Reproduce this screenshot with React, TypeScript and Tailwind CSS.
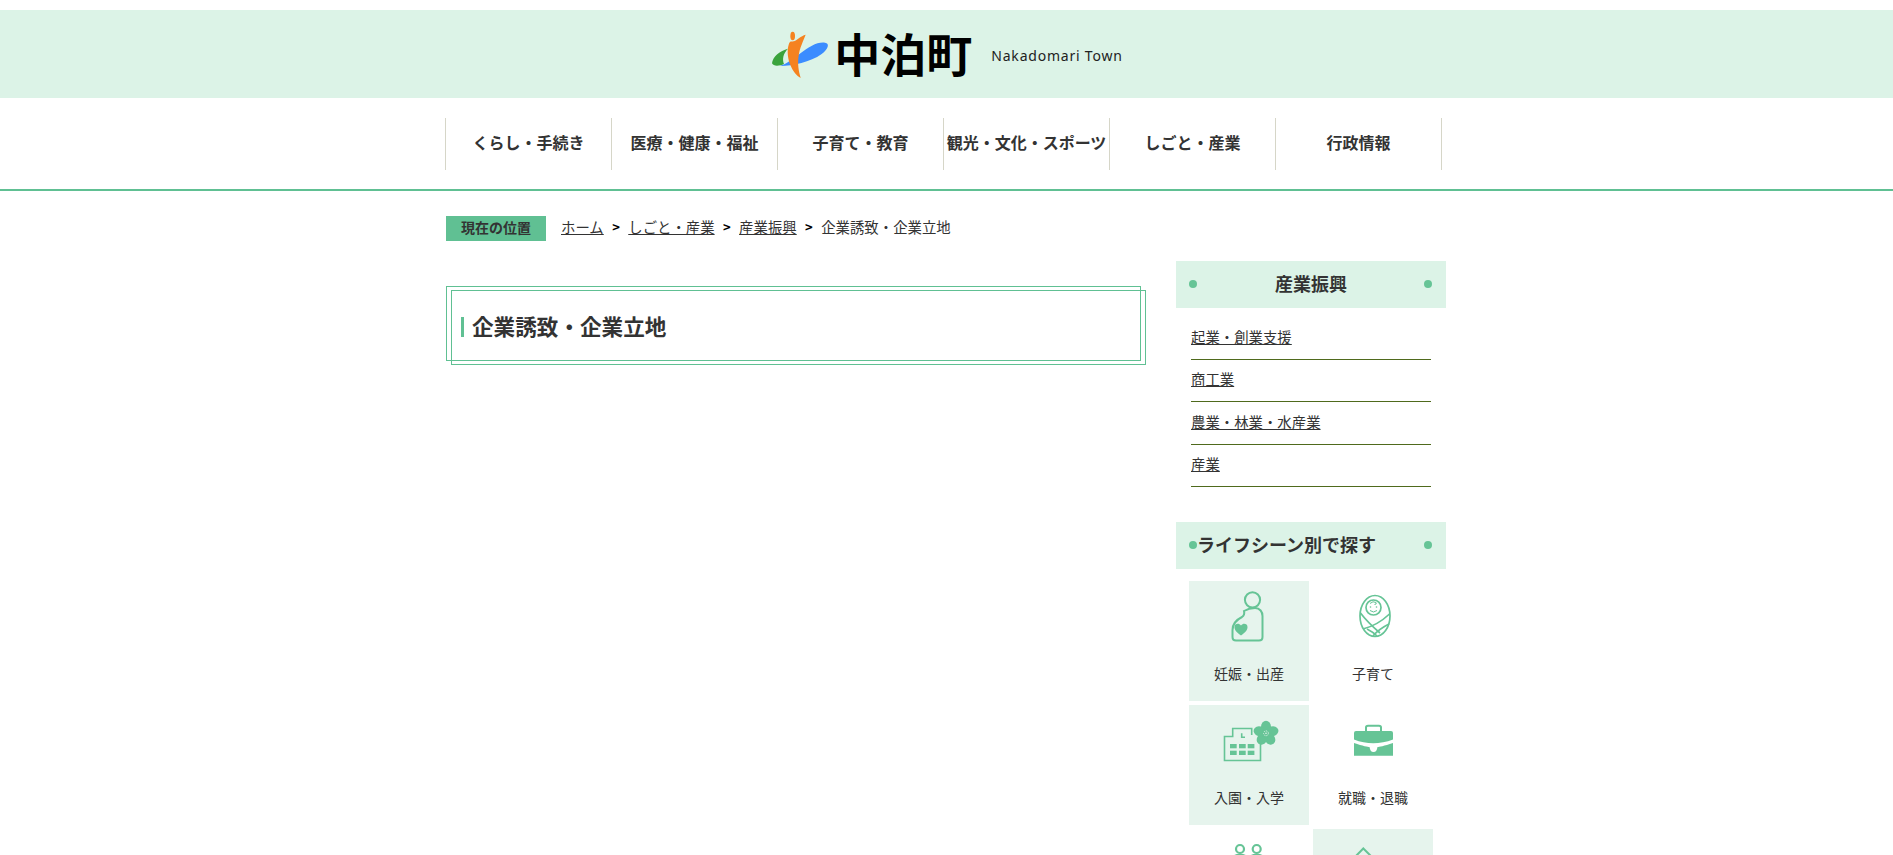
import React from 'react';

const navItems = ['くらし・手続き', '医療・健康・福祉', '子育て・教育', '観光・文化・スポーツ', 'しごと・産業', '行政情報'];
const crumbs = ['ホーム', 'しごと・産業', '産業振興'];
const subLinks = ['起業・創業支援', '商工業', '農業・林業・水産業', '産業'];

function Logo() {
  return (
    <svg viewBox="30 25 180 150" className="w-[60px] h-[50px] shrink-0">
      <path d="M36 128C38 108 60 90 84 84C70 98 66 115 72 130C60 136 40 138 36 128Z" fill="#3aa33c" />
      <path d="M60 136C100 125 150 60 195 66C210 68 205 85 185 100C150 125 100 135 60 136Z" fill="#3b8cff" />
      <ellipse cx="98" cy="46" rx="7" ry="13" fill="#f58220" />
      <path d="M137 42C122 46 112 58 102 62C95 64 90 58 86 72C80 90 84 118 92 135C98 150 110 165 122 172C116 150 112 130 116 105C119 82 130 60 137 42Z" fill="#f58220" />
    </svg>
  );
}

function SideHeader({ title, center }: { title: string; center?: boolean }) {
  return (
    <div className={`relative h-[47px] bg-[#dcf3e7] flex items-center ${center ? 'justify-center' : 'pl-[21px]'}`}>
      <span className="absolute left-[13px] top-[19px] w-2 h-2 rounded-full bg-[#66c496]" />
      <span className="absolute right-[14px] top-[19px] w-2 h-2 rounded-full bg-[#66c496]" />
      <h3 className="relative pb-[2px] text-[18px] font-bold text-[#333]">{title}</h3>
    </div>
  );
}

function PregnantIcon() {
  return (
    <svg viewBox="0 0 60 56" className="w-[60px] h-[56px]" fill="none" stroke="#66c496" strokeWidth="2">
      <circle cx="33.5" cy="10.8" r="7.6" />
      <path d="M25 22Q30 19 36 19C41 19 43.5 23 43.5 27V48Q43.5 51.5 40 51.5H17Q13.5 51.5 13.5 48V41C13.5 34 19 30 23 28Q26 26 25 22Z" />
      <path d="M22 46.5C17 43 15.5 41 15.5 38C15.5 35 19.5 33.5 22 36.5C24.5 33.5 28.5 35 28.5 38C28.5 41 27 43 22 46.5Z" fill="#66c496" stroke="none" />
    </svg>
  );
}

function BabyIcon() {
  return (
    <svg viewBox="0 0 60 56" className="w-[60px] h-[56px]" fill="none" stroke="#66c496" strokeWidth="1.7">
      <ellipse cx="32" cy="27" rx="15" ry="20.5" />
      <circle cx="30.5" cy="18.5" r="7.5" />
      <path d="M27 14.5Q30 11.5 33 13.5Q34 15.5 31.5 15.5" strokeWidth="1" />
      <path d="M27 21.5Q30.5 24.5 34 21.5" strokeWidth="1" />
      <circle cx="27.5" cy="18" r="0.8" fill="#66c496" stroke="none" />
      <circle cx="33.5" cy="18" r="0.8" fill="#66c496" stroke="none" />
      <path d="M17.5 24C22 30 30 38 37 44" />
      <path d="M46.5 25C38 33 28 38 20 40" />
      <path d="M46 35C40 38 34 42 30 47" />
      <path d="M24 40C28 42 32 45 34 47" />
    </svg>
  );
}

function SchoolIcon() {
  return (
    <svg viewBox="0 0 60 56" className="w-[60px] h-[56px]" fill="none" stroke="#66c496" strokeWidth="1.6">
      <path d="M32.7 22V15.5H13.7V23.5H5.5V47.5H41.5V30" />
      <path d="M22.7 20.3V24.3H26" />
      <g fill="#66c496" stroke="none">
        <rect x="11" y="31" width="6.7" height="4.3" />
        <rect x="20" y="31" width="6.7" height="4.3" />
        <rect x="28.7" y="31" width="6.7" height="4.3" />
        <rect x="11" y="37.7" width="6.7" height="4.3" />
        <rect x="20" y="37.7" width="6.7" height="4.3" />
        <rect x="28.7" y="37.7" width="6.7" height="4.3" />
        <ellipse cx="47" cy="13.8" rx="5" ry="6" />
        <ellipse cx="53.5" cy="18.3" rx="5" ry="6" transform="rotate(72 53.5 18.3)" />
        <ellipse cx="51" cy="26" rx="5" ry="6" transform="rotate(144 51 26)" />
        <ellipse cx="43" cy="26" rx="5" ry="6" transform="rotate(216 43 26)" />
        <ellipse cx="40.5" cy="18.3" rx="5" ry="6" transform="rotate(288 40.5 18.3)" />
        <circle cx="47" cy="20.3" r="4" />
      </g>
      <circle cx="47" cy="20.3" r="2.4" fill="none" stroke="#e6f4ed" strokeWidth="1" strokeDasharray="1 1" />
      <circle cx="47" cy="20.3" r="0.8" fill="#e6f4ed" stroke="none" />
    </svg>
  );
}

function BagIcon() {
  return (
    <svg viewBox="0 0 60 56" className="w-[60px] h-[56px]" fill="#66c496">
      <path d="M23 18V14.5Q23 12.7 25 12.7H36Q38 12.7 38 14.5V18" fill="none" stroke="#66c496" strokeWidth="2" />
      <path d="M11 20Q11 18 13 18H48Q50 18 50 20V26.5Q30 34 11 26.5Z" />
      <path d="M11 30C20 33 25 34 26.5 34C27 37 28 39 30.5 39C33 39 34 37 34.5 34C36 34 41 33 50 30V42.7H11Z" />
    </svg>
  );
}

function PeopleIcon() {
  return (
    <svg viewBox="0 0 60 56" className="w-[60px] h-[56px]" fill="none" stroke="#66c496" strokeWidth="2.2">
      <circle cx="21" cy="12" r="4" />
      <circle cx="37.7" cy="12" r="4" />
      <path d="M14 24Q14 17.5 21 17.5Q28 17.5 28 24" />
      <path d="M30.7 24Q30.7 17.5 37.7 17.5Q44.7 17.5 44.7 24" />
    </svg>
  );
}

function HouseIcon() {
  return (
    <svg viewBox="0 0 60 56" className="w-[60px] h-[56px]" fill="none" stroke="#66c496" strokeWidth="2">
      <path d="M8 24L20.3 11.5L33 24" />
    </svg>
  );
}

function Tile({ label, tinted, icon }: { label?: string; tinted?: boolean; icon: React.ReactNode }) {
  return (
    <a className={`h-[120px] pt-2 flex flex-col items-center ${tinted ? 'bg-[#e6f4ed]' : ''}`}>
      {icon}
      {label && <span className="mt-[18px] text-[14px] leading-5 text-[#333]">{label}</span>}
    </a>
  );
}

export default function App() {
  return (
    <div className="h-[855px] overflow-hidden bg-white pt-[10px] font-['Noto_Sans_CJK_JP','Noto_Sans',sans-serif] text-[#333]">
      <header className="h-[88px] bg-[#dcf3e7] flex items-center justify-center">
        <Logo />
        <span className="ml-1 mb-[5px] text-[46px] leading-none font-bold text-black">中泊町</span>
        <span className="ml-[19px] mt-[3px] font-['Noto_Sans',sans-serif] text-[14px] tracking-[0.79px] text-[#222]">Nakadomari Town</span>
      </header>

      <nav className="w-[1000px] ml-[445px] mt-5 h-[52px] flex">
        {navItems.map((item, i) => (
          <a
            key={item}
            className={`w-[166px] pb-[4px] flex items-center justify-center border-l border-[#d6d6c8] text-[16px] font-bold whitespace-nowrap ${i === 5 ? 'border-r w-[167px]' : ''}`}>
            {item}
          </a>
        ))}
      </nav>
      <div className="mt-[19px] h-[2px] bg-[#60c093]" />

      <div className="w-[1000px] ml-[446px]">
        <div className="mt-[25px] h-[25px] flex items-center text-[14.4px]">
          <span className="w-[100px] h-[25px] pb-[2px] flex items-center justify-center bg-[#60c093] text-[14px] font-bold">現在の位置</span>
          <span className="w-[15px]" />
          {crumbs.map((c) => (
            <React.Fragment key={c}>
              <a className="underline pb-[3px]">{c}</a>
              <span className="w-[24.5px] pb-[3px] text-center text-[13px] font-bold text-black">&gt;</span>
            </React.Fragment>
          ))}
          <span className="pb-[3px]">企業誘致・企業立地</span>
        </div>

        <div className="mt-5 flex justify-between">
          <main className="w-[700px] pt-[25px]">
            <div className="relative w-[695px] h-[75px] border border-[#60c093] pl-[14px] pt-[6px] flex items-center">
              <div className="absolute left-[4px] top-[3px] w-[695px] h-[75px] border border-[#60c093]" />
              <span className="w-[3px] h-5 bg-[#60c093]" />
              <h1 className="ml-2 text-[21.6px] font-bold">企業誘致・企業立地</h1>
            </div>
          </main>

          <aside className="w-[270px]">
            <SideHeader title="産業振興" center />
            <ul className="mt-[9px] mb-[35px] mx-[15px]">
              {subLinks.map((l) => (
                <li key={l} className="h-[42.5px] pb-[2px] flex items-center border-b border-[#4f6a1d] text-[14.4px]">
                  <a className="underline">{l}</a>
                </li>
              ))}
            </ul>

            <SideHeader title="ライフシーン別で探す" />
            <div className="mt-3 ml-[13px] grid grid-cols-[120px_120px] gap-1">
              <Tile label="妊娠・出産" tinted icon={<PregnantIcon />} />
              <Tile label="子育て" icon={<BabyIcon />} />
              <Tile label="入園・入学" tinted icon={<SchoolIcon />} />
              <Tile label="就職・退職" icon={<BagIcon />} />
              <Tile icon={<PeopleIcon />} />
              <Tile tinted icon={<HouseIcon />} />
            </div>
          </aside>
        </div>
      </div>
    </div>
  );
}
